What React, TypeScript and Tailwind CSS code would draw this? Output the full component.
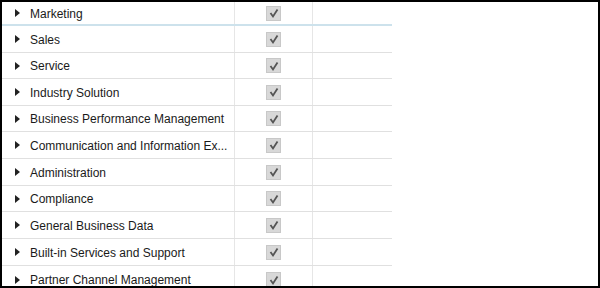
import React from "react";

const rows: [string, string][] = [
  ["Sales", "h-[27px]"],
  ["Service", "h-[26px]"],
  ["Industry Solution", "h-[27px]"],
  ["Business Performance Management", "h-[26px]"],
  ["Communication and Information Ex...", "h-[27px]"],
  ["Administration", "h-[27px]"],
  ["Compliance", "h-[26px]"],
  ["General Business Data", "h-[27px]"],
  ["Built-in Services and Support", "h-[27px]"],
  ["Partner Channel Management", "h-[27px]"],
];

function Check() {
  return (
    <div className="w-[15px] h-[15px] bg-[#d8d8d8] border border-[#c8c8c8] flex items-center justify-center">
      <svg width="12" height="12" viewBox="0 0 12 12">
        <path d="M2.5 6 L5 9.5 L9.5 2.5" fill="none" stroke="#555555" strokeWidth="1.8" />
      </svg>
    </div>
  );
}

function Arrow() {
  return (
    <svg width="5" height="8" viewBox="0 0 5 8" className="block">
      <path d="M0 0 L5 4 L0 8 Z" fill="#222" />
    </svg>
  );
}

function Cells({ label }: { label: string }) {
  return (
    <>
      <div className="w-[233px] shrink-0 flex items-center border-r border-[#e6e6e6]">
        <div className="w-[28px] shrink-0 flex justify-center pl-[2px]">
          <Arrow />
        </div>
        <span className="text-[12px] text-[#1a1a1a] whitespace-nowrap pt-[1px]">{label}</span>
      </div>
      <div className="w-[78px] shrink-0 flex items-center justify-center border-r border-[#e6e6e6]">
        <Check />
      </div>
      <div className="w-[78px] shrink-0" />
    </>
  );
}

export default function App() {
  return (
    <div
      className="w-[600px] h-[288px] border-2 border-black bg-white overflow-hidden"
      style={{ fontFamily: '"Liberation Sans", Arial, sans-serif' }}
    >
      <div className="w-[390px]">
        <div className="flex h-[24px] border-b-2 border-[#cde2ec]">
          <Cells label="Marketing" />
        </div>
        {rows.map(([r, h], i) => (
          <div
            key={r}
            className={`flex ${h} ${i === rows.length - 1 ? "" : "border-b border-[#e0e0e0]"}`}
          >
            <Cells label={r} />
          </div>
        ))}
      </div>
    </div>
  );
}
